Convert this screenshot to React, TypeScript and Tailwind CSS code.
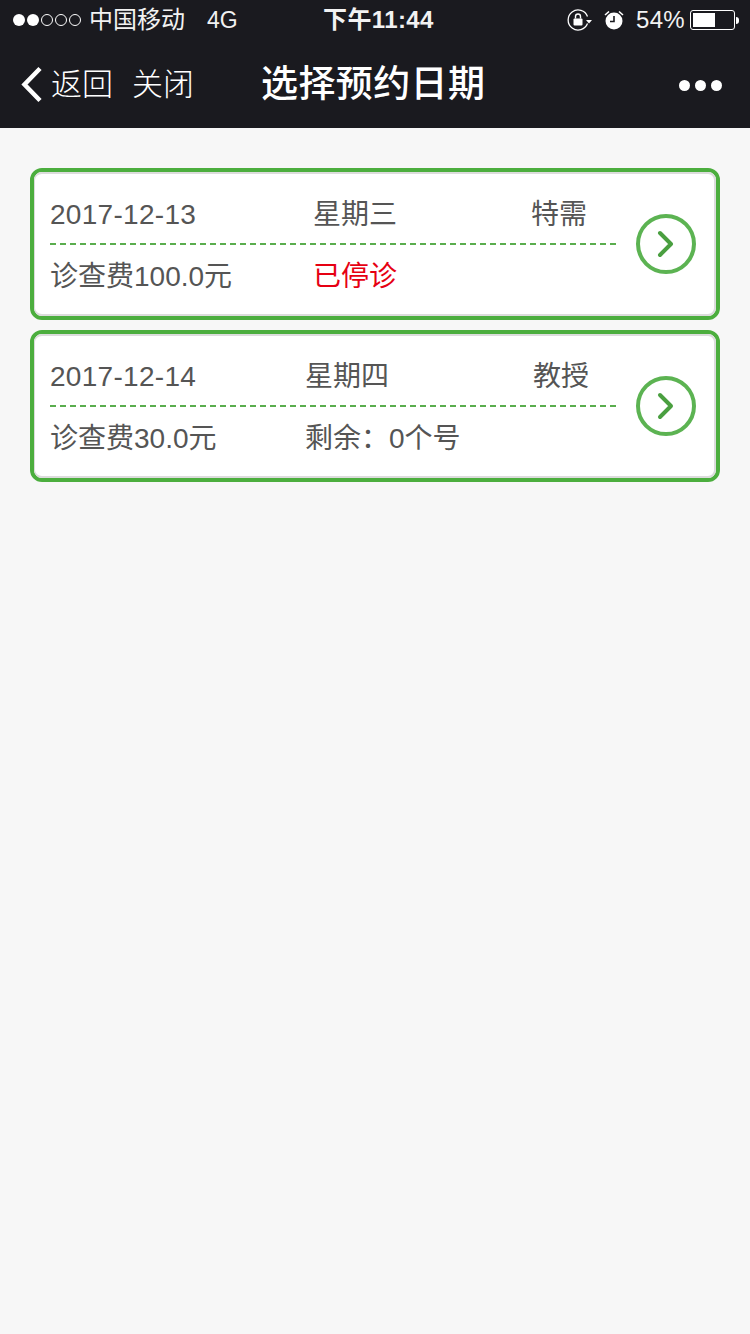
import React from "react";

const FONT = "font-['Liberation_Sans','Noto_Sans_CJK_SC',sans-serif]";

function Card({ date, week, kind, fee, status, statusRed, midX, kindX }: {
  date: string; week: string; kind: string; fee: string; status: string; statusRed?: boolean; midX: string; kindX: string;
}) {
  return (
    <div className="h-[152px] rounded-[12px] border-[4px] border-[#4cae3e] bg-white">
      <div className="h-full rounded-[8px] border-b-2 border-r-2 border-t-2 border-l border-[#dcdcdc] pl-[15px] pr-[18px] flex items-center">
        <div className="w-[566px] shrink-0 mb-[1px]">
          <div className="h-[66px] pt-[7px] flex items-center text-[28px] text-[#555555] border-b-2 border-dashed border-[#5aad4e]">
            <span className={`${midX} tracking-[0.3px]`}>{date}</span>
            <span className={kindX}>{week}</span>
            <span>{kind}</span>
          </div>
          <div className="h-[63px] flex items-center text-[28px] text-[#555555]">
            <span className={midX}>{fee}</span>
            <span className={statusRed ? "text-[#e60012]" : ""}>{status}</span>
          </div>
        </div>
        <div className="ml-auto w-[60px] h-[60px] rounded-full border-[4px] border-[#5cb352] flex items-center justify-center">
          <svg width="20" height="28" viewBox="0 0 20 28" fill="none">
            <path d="M4 3 L15 14 L4 25" stroke="#4a9f40" strokeWidth="4" strokeLinecap="round" strokeLinejoin="round" />
          </svg>
        </div>
      </div>
    </div>
  );
}

export default function App() {
  return (
    <div className={`min-h-[1334px] bg-[#f7f7f7] ${FONT}`}>
      <div className="h-[128px] bg-[#1a1a1f] text-white">
        {/* Status bar */}
        <div className="h-[40px] pl-[13px] flex items-center text-[24px] text-[#f2f2f2]">
          <div className="flex items-center gap-[2px] w-[68px] shrink-0">
            <span className="w-[12px] h-[12px] shrink-0 rounded-full bg-white" />
            <span className="w-[12px] h-[12px] shrink-0 rounded-full bg-white" />
            <span className="w-[12px] h-[12px] shrink-0 rounded-full border border-white" />
            <span className="w-[12px] h-[12px] shrink-0 rounded-full border border-white" />
            <span className="w-[12px] h-[12px] shrink-0 rounded-full border border-white" />
          </div>
          <span className="ml-[8px] w-[118px] shrink-0">中国移动</span>
          <span className="w-[116px] shrink-0 text-[23px]">4G</span>
          <span className="font-semibold w-[244px] shrink-0 tracking-[0.4px]">下午11:44</span>
          <svg width="26" height="24" viewBox="0 0 26 24" fill="none" className="mr-[10px] shrink-0">
            <path d="M20.5 8.5 A10 10 0 1 0 20.5 15.5" stroke="#fff" strokeWidth="1.3" />
            <path d="M19 12 h6 l-3 3.5 z" fill="#fff" />
            <rect x="6.5" y="10.5" width="9" height="7" rx="1" fill="#fff" />
            <path d="M8.5 10.5 V8.5 a2.5 2.5 0 0 1 5 0 V10.5" stroke="#fff" strokeWidth="1.4" />
          </svg>
          <svg width="22" height="24" viewBox="0 0 22 24" fill="none" className="mr-[11px] shrink-0">
            <circle cx="11" cy="13" r="8.5" fill="#fff" />
            <path d="M11 8 V13.5 H7" stroke="#1a1a1f" strokeWidth="1.6" />
            <path d="M2 7 L6 3.5 M20 7 L16 3.5" stroke="#fff" strokeWidth="1.6" />
          </svg>
          <span className="w-[54px] shrink-0 text-[24px] tracking-[0.3px]">54%</span>
          <div className="w-[45px] h-[20px] shrink-0 rounded-[3px] border border-white p-[2px]">
            <div className="w-[22px] h-full bg-white" />
          </div>
          <span className="ml-[1px] w-[3px] h-[7px] shrink-0 rounded-r-full bg-white" />
        </div>
        {/* Nav bar */}
        <div className="h-[88px] flex items-center pl-[20px] pr-[28px] pt-[2px]">
          <svg width="24" height="38" viewBox="0 0 24 38" fill="none" className="shrink-0">
            <path d="M20 2.5 L4.5 18.5 L20 34.5" stroke="#fff" strokeWidth="4.5" />
          </svg>
          <span className="ml-[7px] w-[81px] text-[31px] font-light">返回</span>
          <span className="w-[129px] text-[31px] font-light">关闭</span>
          <span className="text-[37px] font-medium tracking-[0.4px]">选择预约日期</span>
          <div className="ml-auto flex gap-[5px]">
            <span className="w-[11px] h-[11px] rounded-full bg-white" />
            <span className="w-[11px] h-[11px] rounded-full bg-white" />
            <span className="w-[11px] h-[11px] rounded-full bg-white" />
          </div>
        </div>
      </div>
      {/* Appointment cards */}
      <div className="px-[30px] pt-[40px] flex flex-col gap-[10px]">
        <Card date="2017-12-13" week="星期三" kind="特需" fee="诊查费100.0元" status="已停诊" statusRed midX="w-[263px]" kindX="w-[218px]" />
        <Card date="2017-12-14" week="星期四" kind="教授" fee="诊查费30.0元" status="剩余：0个号" midX="w-[255px]" kindX="w-[228px]" />
      </div>
    </div>
  );
}
